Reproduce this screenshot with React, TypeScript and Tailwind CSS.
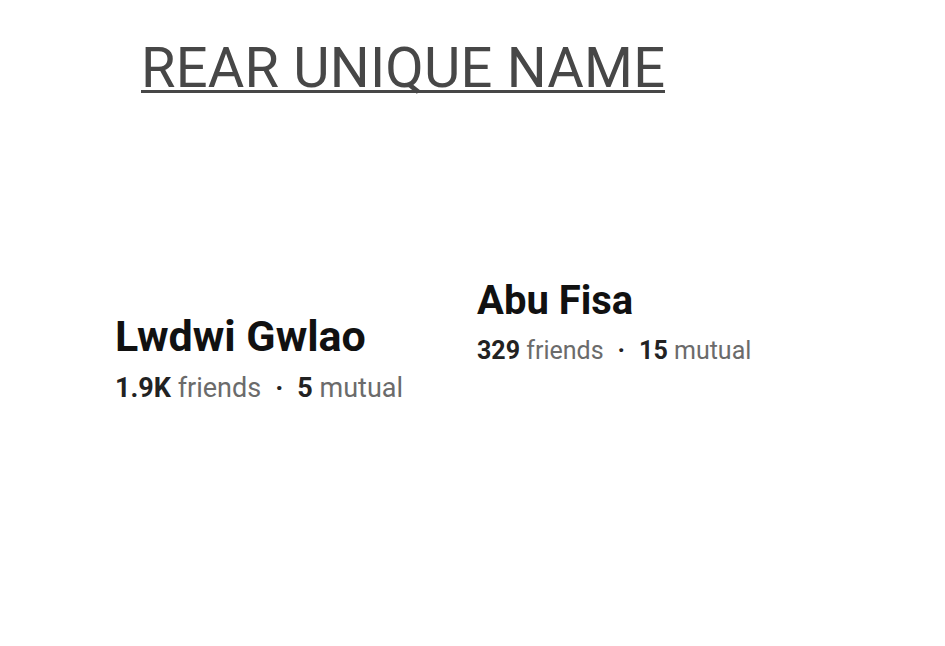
export default function App() {
  return (
    <div className="w-[945px] h-[646px] bg-white overflow-hidden font-['Roboto',sans-serif]">
      <div className="pl-[141px] pt-[40px]">
        <h1 className="inline-block h-[53px] text-[56px] leading-[56px] tracking-[0.2px] text-[#474747] border-b-[3px] border-[#474747]">
          REAR UNIQUE NAME
        </h1>
      </div>

      <div className="flex items-start pl-[115px] pt-[187px]">
        <div className="w-[362px] mt-[34px]">
          <h2 className="text-[43px] leading-[43px] font-bold text-[#111]">Lwdwi Gwlao</h2>
          <p className="mt-[17px] text-[27px] leading-[27px] text-[#6b6b6b]">
            <span className="font-bold text-[#222]">1.9K</span> friends
            <span className="mx-[14px] font-bold text-[#222]">·</span>
            <span className="font-bold text-[#222]">5</span> mutual
          </p>
        </div>
        <div>
          <h2 className="text-[40px] leading-[40px] font-bold text-[#111]">Abu Fisa</h2>
          <p className="mt-[17px] text-[25px] leading-[25px] text-[#6b6b6b]">
            <span className="font-bold text-[#222]">329</span> friends
            <span className="mx-[14px] font-bold text-[#222]">·</span>
            <span className="font-bold text-[#222]">15</span> mutual
          </p>
        </div>
      </div>
    </div>
  );
}
